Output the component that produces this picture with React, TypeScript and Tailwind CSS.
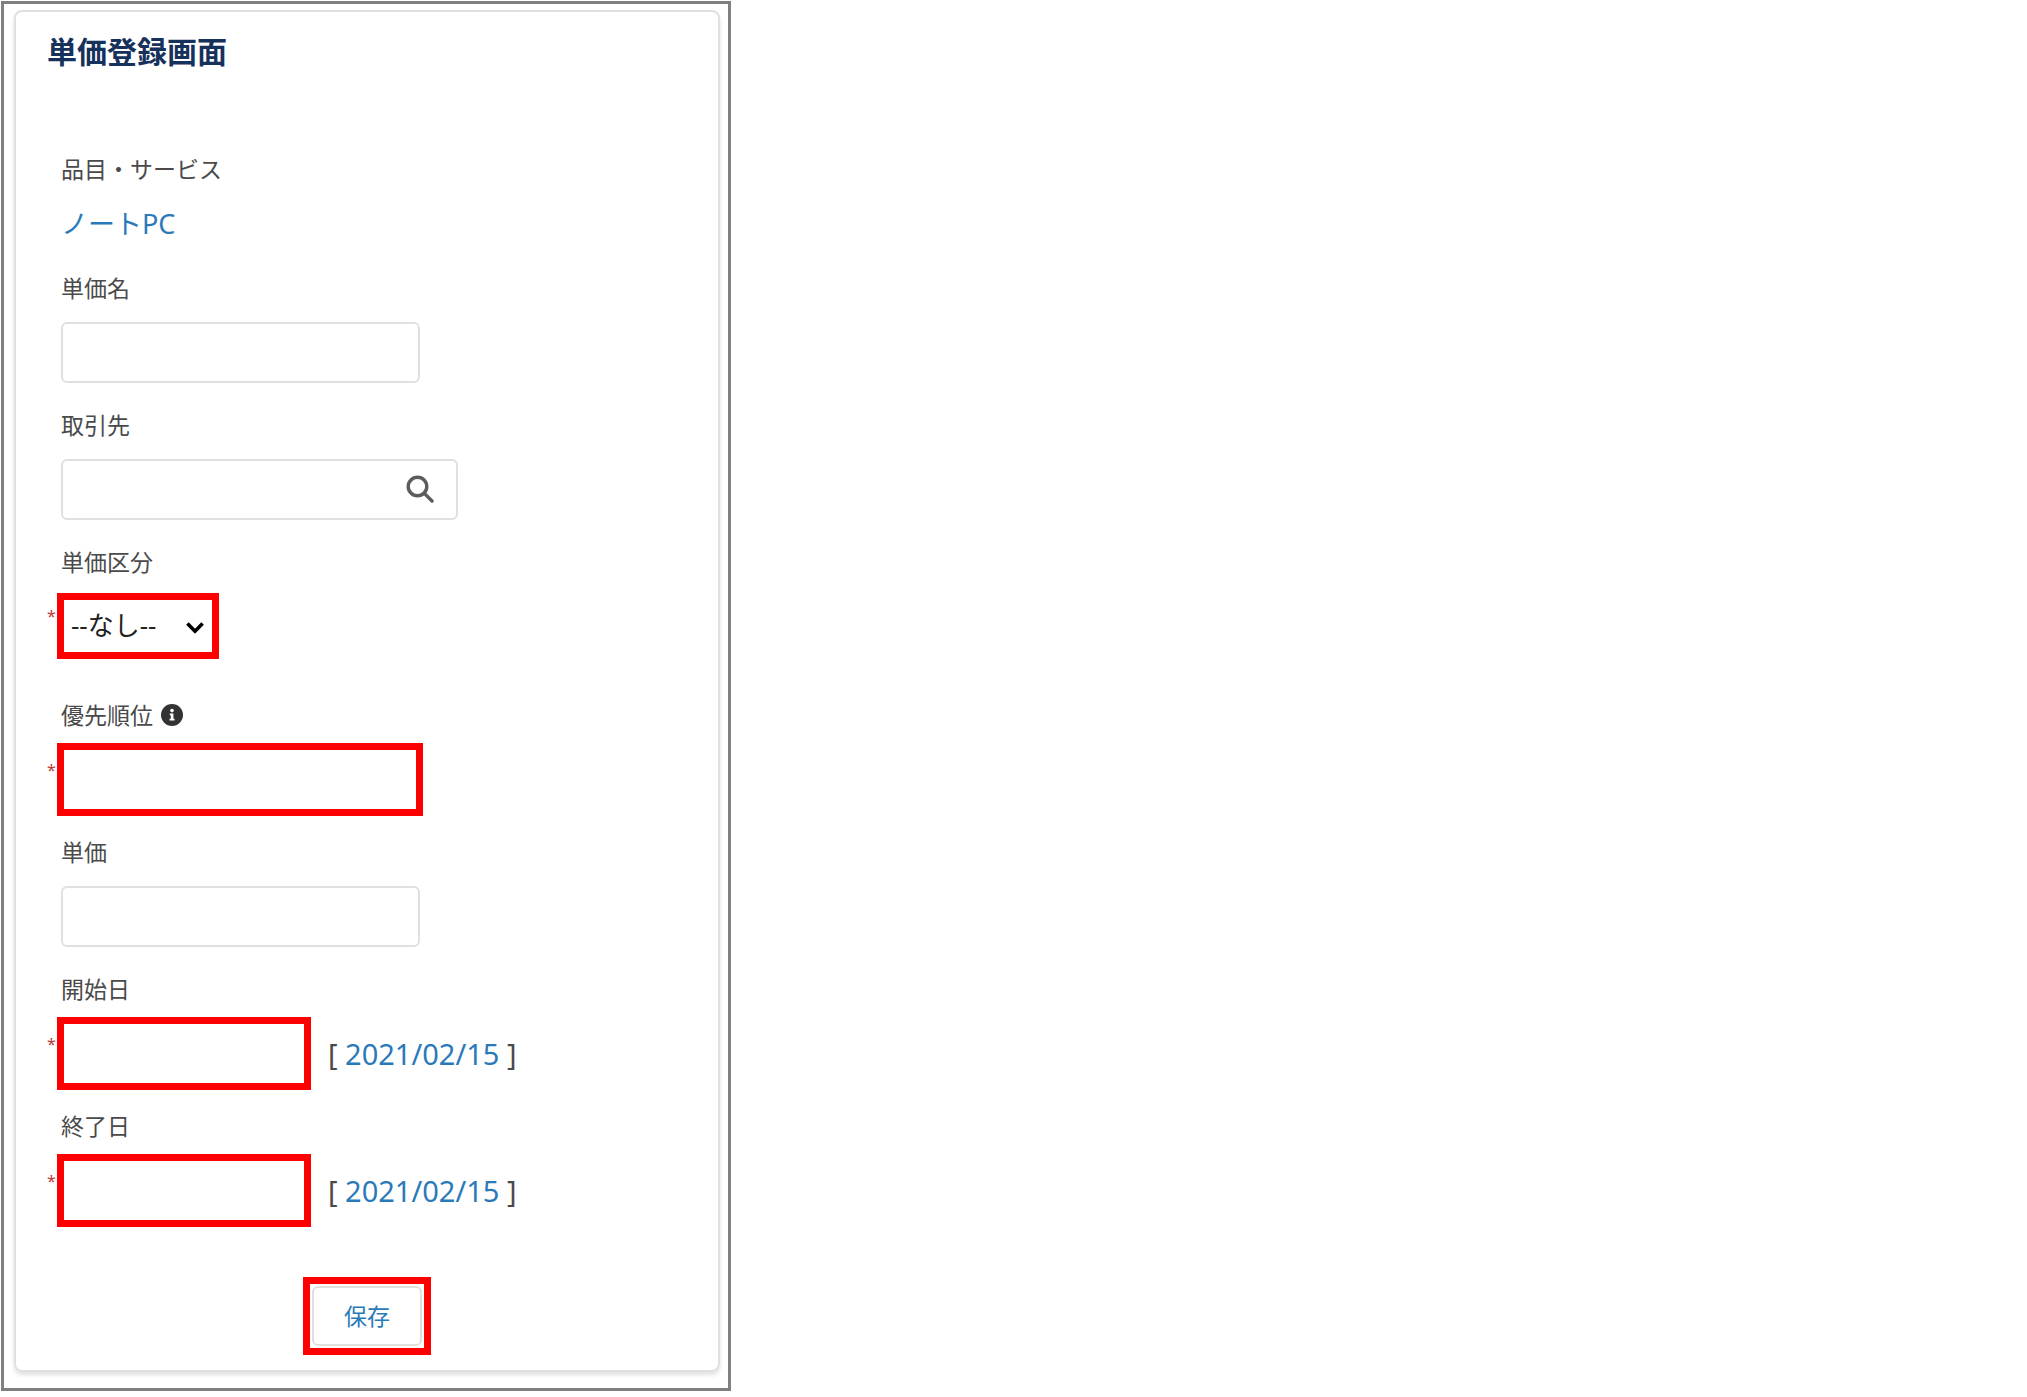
import React from "react";

type FieldProps = {
  id: string;
  label: string;
  required?: boolean;
  tall?: boolean;
  info?: boolean;
  children: React.ReactNode;
};

function Field({ id, label, required, tall, info, children }: FieldProps) {
  return (
    <div className="flex flex-col">
      <div className="ml-[14px] flex items-center gap-2">
        <label htmlFor={id} className="text-[23px] leading-[34px]">
          {label}
        </label>
        {info && <InfoIcon />}
      </div>
      <div className={tall ? "flex h-[119px] items-center pb-[26px]" : "flex h-[103px] items-center pb-[8px]"}>
        {required ? (
          <span className="w-[10px] shrink-0 pb-5 text-base leading-6 text-[#c23934]" aria-hidden="true">
            *
          </span>
        ) : (
          <span className="w-[14px] shrink-0" />
        )}
        {children}
      </div>
    </div>
  );
}

function InfoIcon() {
  return (
    <svg width="22" height="22" viewBox="0 0 22 22" aria-hidden="true">
      <circle cx="11" cy="11" r="11" fill="#333" />
      <circle cx="11" cy="6.6" r="1.8" fill="#fff" />
      <path d="M8.8 9.6h3.6v5.2h1.2v1.6H8.6v-1.6h1.2v-3.6h-1z" fill="#fff" />
    </svg>
  );
}

function DateField({ id, label }: { id: string; label: string }) {
  return (
    <Field id={id} label={label} required>
      <input id={id} type="text" required className="h-[73px] w-[254px] border-[7px] border-[#ff0000] bg-white px-3 text-[27px] outline-none" />
      <span className="ml-[17px] whitespace-pre text-[29px] leading-9">
        [{" "}
        <a href="#" className="text-[#2a7ab9]">
          2021/02/15
        </a>{" "}
        ]
      </span>
    </Field>
  );
}

const plain = "h-[61px] rounded-md border-2 border-[#e0e0e0] bg-white px-4 text-[27px] outline-none";

export default function App() {
  return (
    <main className="pt-px pl-px font-['Noto_Sans','Noto_Sans_CJK_JP',sans-serif] text-[#4a4a4a]">
      <div className="w-full max-w-[730px] border-[3px] border-[#808080] bg-white pt-[6px] pr-2 pb-4 pl-[10px]">
        <form
          className="rounded-lg border-2 border-[#e0e0e0] px-[31px] pt-[22px] pb-[15px] shadow-[0_3px_4px_rgba(0,0,0,0.12)]"
          onSubmit={(e) => e.preventDefault()}
        >
          <h1 className="text-[30px] leading-9 font-bold text-[#16325c]">単価登録画面</h1>

          <div className="mt-[82px] mb-[29px] ml-[14px]">
            <p className="text-[23px] leading-[34px]">品目・サービス</p>
            <a href="#" className="mt-5 block w-fit text-[27px] leading-9 text-[#2a7ab9]">
              ノートPC
            </a>
          </div>

          <Field id="name" label="単価名">
            <input id="name" type="text" className={`${plain} w-[359px]`} />
          </Field>

          <Field id="account" label="取引先">
            <div className="relative">
              <input id="account" type="text" className={`${plain} w-[397px]`} />
              <button type="button" aria-label="検索" className="absolute top-4 right-6">
                <svg width="28" height="28" viewBox="0 0 28 28" fill="none" stroke="#5c5c5c" strokeWidth="3.4" strokeLinecap="round" aria-hidden="true">
                  <circle cx="11.5" cy="11.5" r="9.3" />
                  <path d="M18.6 18.6 26 26" />
                </svg>
              </button>
            </div>
          </Field>

          <Field id="kind" label="単価区分" required tall>
            <div className="relative">
              <select id="kind" required className="h-[66px] w-[162px] appearance-none border-[7px] border-[#ff0000] bg-white pl-[7px] text-[26px] text-[#222] outline-none">
                <option>--なし--</option>
              </select>
              <svg className="pointer-events-none absolute top-[29px] right-[15px]" width="18" height="12" viewBox="0 0 18 12" fill="none" stroke="#000" strokeWidth="3.6" aria-hidden="true">
                <path d="M1.4 1.6 9 9.2l7.600-7.600" />
              </svg>
            </div>
          </Field>

          <Field id="priority" label="優先順位" required info>
            <input id="priority" type="text" required className="h-[73px] w-[366px] border-[7px] border-[#ff0000] bg-white px-3 text-[27px] outline-none" />
          </Field>

          <Field id="price" label="単価">
            <input id="price" type="text" className={`${plain} w-[359px]`} />
          </Field>

          <DateField id="start" label="開始日" />
          <DateField id="end" label="終了日" />

          <div className="mt-[31px] flex justify-center">
            <div className="border-[7px] border-[#ff0000] p-[2px]">
              <button type="submit" className="h-[60px] w-[110px] rounded-md border-2 border-[#e0e0e0] bg-white text-[23px] text-[#2a7ab9]">
                保存
              </button>
            </div>
          </div>
        </form>
      </div>
    </main>
  );
}
